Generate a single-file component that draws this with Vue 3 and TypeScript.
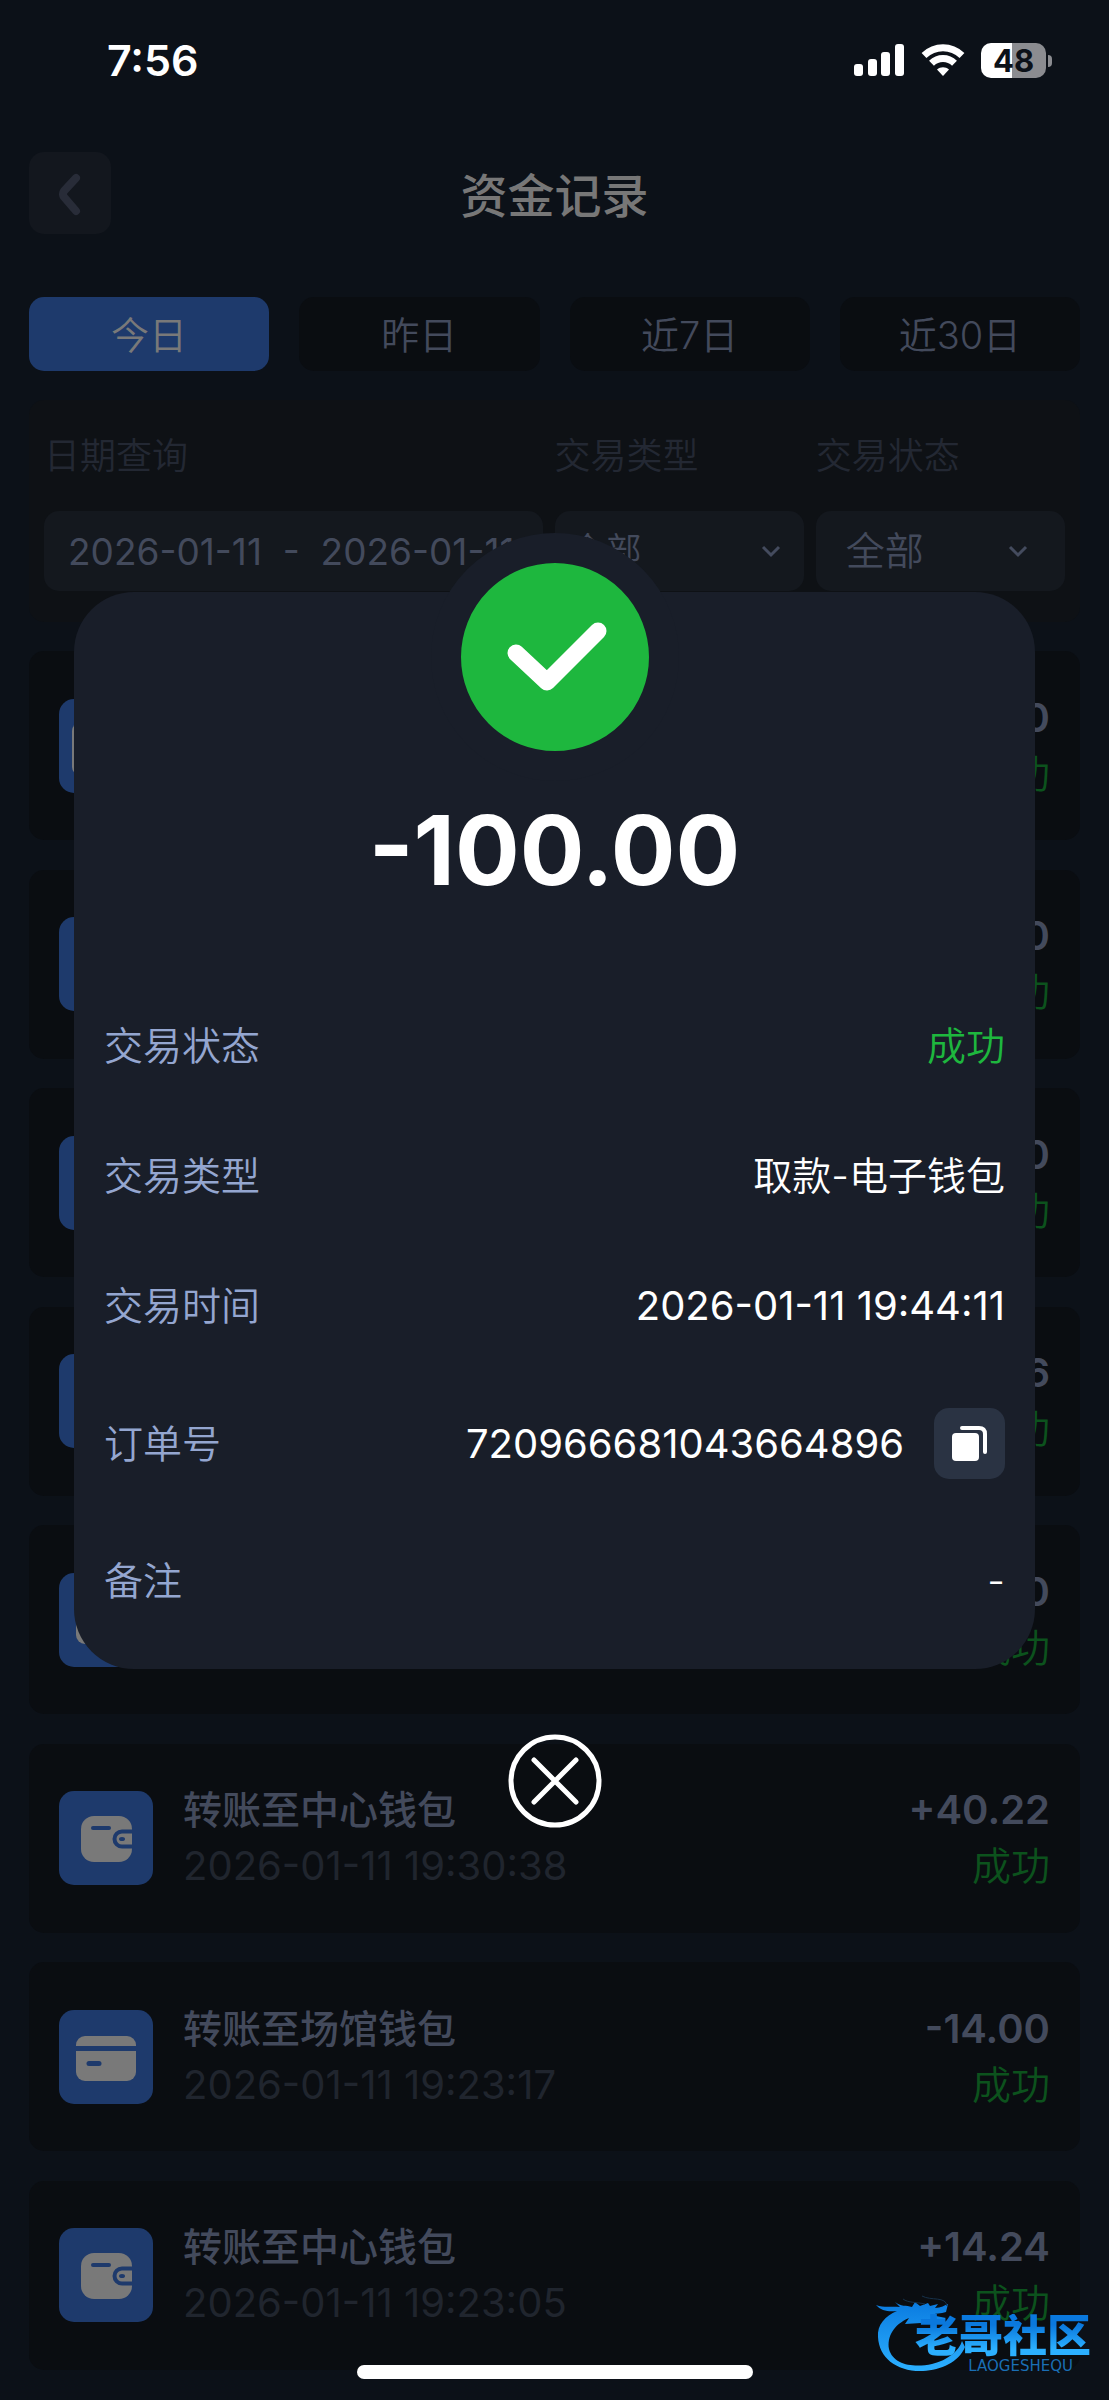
<script setup lang="ts">
import { ref } from 'vue'

type IconKind = 'withdraw' | 'wallet' | 'card'

interface FundRecord {
  id: number
  icon: IconKind
  title: string
  time: string
  amount: string
}

const ranges: string[] = ['今日', '昨日', '近7日', '近30日']
const activeRange = ref(0)
const dateRange = ref('2026-01-11  -  2026-01-11')
const tradeType = ref('全部')
const tradeStatus = ref('全部')

const records: FundRecord[] = [
  { id: 1, icon: 'withdraw', title: '取款-电子钱包', time: '2026-01-11 19:44:11', amount: '-100.00' },
  { id: 2, icon: 'wallet', title: '转账至中心钱包', time: '2026-01-11 19:43:52', amount: '+60.00' },
  { id: 3, icon: 'wallet', title: '转账至中心钱包', time: '2026-01-11 19:41:20', amount: '+20.00' },
  { id: 4, icon: 'wallet', title: '转账至中心钱包', time: '2026-01-11 19:36:47', amount: '+34.46' },
  { id: 5, icon: 'card', title: '转账至场馆钱包', time: '2026-01-11 19:31:02', amount: '-40.00' },
  { id: 6, icon: 'wallet', title: '转账至中心钱包', time: '2026-01-11 19:30:38', amount: '+40.22' },
  { id: 7, icon: 'card', title: '转账至场馆钱包', time: '2026-01-11 19:23:17', amount: '-14.00' },
  { id: 8, icon: 'wallet', title: '转账至中心钱包', time: '2026-01-11 19:23:05', amount: '+14.24' },
]
</script>

<template>
  <div class="page">
    <div class="status-bar">
      <span class="clock">7:56</span>
      <div class="indicators">
        <svg class="signal" width="50" height="32" viewBox="0 0 50 32" fill="#fff">
          <rect x="0" y="20" width="9" height="12" rx="3" />
          <rect x="14" y="15" width="9" height="17" rx="3" />
          <rect x="27" y="8" width="9" height="24" rx="3" />
          <rect x="41" y="0" width="9" height="32" rx="3" />
        </svg>
        <svg class="wifi" width="44" height="32" viewBox="0 0 44 32">
          <g fill="none" stroke="#fff" stroke-width="7">
            <path d="M3 11.5C14 1.2 30 1.2 41 11.5" />
            <path d="M10.5 19.3C17 13 27 13 33.5 19.3" />
          </g>
          <path d="M22 32L16 25.500C19.500 22.500 24.500 22.500 28 25.500Z" fill="#fff" />
        </svg>
        <div class="battery"><span>48</span></div>
      </div>
    </div>

    <header class="header">
      <button class="back" type="button" aria-label="返回">
        <svg width="82" height="82" viewBox="0 0 82 82" fill="none">
          <path d="M47 26L35 39Q33 42 35 45L47 59" stroke="#282c38" stroke-width="8" stroke-linecap="round" stroke-linejoin="round" />
        </svg>
      </button>
      <h1>资金记录</h1>
    </header>

    <nav class="ranges">
      <button
        v-for="(r, i) in ranges"
        :key="r"
        type="button"
        :class="{ active: i === activeRange }"
        @click="activeRange = i"
      >{{ r }}</button>
    </nav>

    <section class="filters">
      <div class="field">
        <label for="date-range">日期查询</label>
        <input id="date-range" v-model="dateRange" class="control date" type="text" readonly />
      </div>
      <div class="field">
        <label for="trade-type">交易类型</label>
        <div class="select-wrap compact">
          <select id="trade-type" v-model="tradeType" class="control"><option>全部</option></select>
          <svg width="20" height="14" viewBox="0 0 20 14" fill="none"><path d="M2 3L10 11L18 3" stroke="#444b5e" stroke-width="3" /></svg>
        </div>
      </div>
      <div class="field">
        <label for="trade-status">交易状态</label>
        <div class="select-wrap">
          <select id="trade-status" v-model="tradeStatus" class="control"><option>全部</option></select>
          <svg width="20" height="14" viewBox="0 0 20 14" fill="none"><path d="M2 3L10 11L18 3" stroke="#444b5e" stroke-width="3" /></svg>
        </div>
      </div>
    </section>

    <ul class="records">
      <li v-for="item in records" :key="item.id" class="record">
        <span class="tile">
          <svg v-if="item.icon === 'wallet'" width="94" height="94" viewBox="0 0 94 94">
            <rect x="22" y="25" width="51" height="46" rx="13" fill="#797979" />
            <path d="M34 37H50" stroke="#1e3a6c" stroke-width="4" stroke-linecap="round" />
            <path d="M75 40.500H63A7.500 7.500 0 0 0 63 55.500H75" fill="none" stroke="#1e3a6c" stroke-width="4" />
            <ellipse cx="63" cy="48" rx="3" ry="2" fill="#1e3a6c" />
          </svg>
          <svg v-else-if="item.icon === 'card'" width="94" height="94" viewBox="0 0 94 94">
            <rect x="17" y="26" width="60" height="45" rx="9" fill="#797979" />
            <path d="M17 38.500H77" stroke="#1e3a6c" stroke-width="5" />
            <path d="M30 53.500H40" stroke="#1e3a6c" stroke-width="5" stroke-linecap="round" />
          </svg>
          <svg v-else width="94" height="94" viewBox="0 0 94 94">
            <rect x="13" y="24" width="68" height="52" rx="8" fill="#797979" />
            <circle cx="47" cy="50" r="10" fill="#1e3a6c" />
          </svg>
        </span>
        <div class="info">
          <strong>{{ item.title }}</strong>
          <time>{{ item.time }}</time>
        </div>
        <div class="result">
          <strong>{{ item.amount }}</strong>
          <span>成功</span>
        </div>
      </li>
    </ul>

    <div class="overlay">
      <section class="dialog" role="dialog" aria-label="交易详情">
        <div class="badge">
          <svg width="188" height="188" viewBox="0 0 188 188" fill="none">
            <path d="M55 90L86 119L137 68" stroke="#fff" stroke-width="17" stroke-linecap="round" stroke-linejoin="round" />
          </svg>
        </div>
        <p class="amount">-100.00</p>
        <dl class="details">
          <div><dt>交易状态</dt><dd class="ok">成功</dd></div>
          <div><dt>交易类型</dt><dd>取款-电子钱包</dd></div>
          <div><dt>交易时间</dt><dd class="number">2026-01-11 19:44:11</dd></div>
          <div>
            <dt>订单号</dt>
            <dd class="number">
              720966681043664896
              <button class="copy" type="button" aria-label="复制订单号">
                <svg width="71" height="71" viewBox="0 0 71 71">
                  <rect x="18" y="25" width="27" height="28" rx="4" fill="#fff" />
                  <path d="M28 20H45Q51 20 51 26V44" fill="none" stroke="#fff" stroke-width="4" stroke-linecap="round" />
                </svg>
              </button>
            </dd>
          </div>
          <div><dt>备注</dt><dd>-</dd></div>
        </dl>
      </section>
      <button class="close" type="button" aria-label="关闭">
        <svg width="94" height="94" viewBox="0 0 94 94" fill="none" stroke="#fff" stroke-width="5" stroke-linecap="round">
          <circle cx="47" cy="47" r="44" />
          <path d="M26 26L68 68M68 26L26 68" />
        </svg>
      </button>
    </div>

    <div class="watermark">
      <svg width="100" height="80" viewBox="0 0 100 80">
        <defs>
          <linearGradient id="wm" x1="0" y1="0" x2="0" y2="1">
            <stop offset="0" stop-color="#0a7be0" />
            <stop offset="1" stop-color="#2cb0ff" />
          </linearGradient>
        </defs>
        <path
          fill="url(#wm)"
          d="M1 11C9 14 17 12 25 13L20 8C26 13 31 11 37 13L40 8L45 12L53 9L55 12L63 10L60 14C66 14 70 11 73 10L71 18C66 20 60 19 56 21L71 24L66 28C58 26 52 25 46 29L30 30L34 24C18 31 12 43 14 55C18 71 39 74 57 70C73 66 84 57 87 47L90 53C84 68 66 76 48 77C22 78 4 64 3 43C2 31 10 22 22 17C14 18 6 17 1 11Z"
        />
        <path d="M28 5C33 9 42 8 50 10M47 2C56 7 71 2 72 12" fill="none" stroke="#16314a" stroke-width="1" />
      </svg>
      <div class="wm-text">
        <b>老哥社区</b>
        <small>LAOGESHEQU</small>
      </div>
    </div>
    <div class="home-indicator"></div>
  </div>
</template>

<style>
body {
  margin: 0;
  background: #0c1118;
}
</style>

<style scoped>
* {
  box-sizing: border-box;
}

.page {
  position: relative;
  display: flex;
  flex-direction: column;
  min-height: 100vh;
  padding: 0 29px 30px;
  background: #0c1118;
  color: #434a5c;
  font-family: 'Inter', 'Noto Sans CJK SC', sans-serif;
  font-size: 39px;
  line-height: 56px;
}

button,
input,
select {
  margin: 0;
  padding: 0;
  border: 0;
  font: inherit;
  color: inherit;
}

svg {
  display: block;
}

.status-bar {
  display: flex;
  align-items: center;
  justify-content: space-between;
  height: 120px;
  padding: 0 34px 0 78px;
  color: #fff;
}

.clock {
  font-size: 43px;
  font-weight: 600;
}

.indicators {
  display: flex;
  align-items: center;
}

.wifi {
  margin: 0 16px 0 17px;
}

.battery {
  position: relative;
  width: 65px;
  height: 35px;
  border-radius: 10px;
  background: linear-gradient(90deg, #fff 48%, #8b8c90 48%);
  color: #0c1118;
  font-size: 31px;
  font-weight: 700;
  line-height: 35px;
  text-align: center;
}

.battery::after {
  content: '';
  position: absolute;
  top: 12px;
  right: -6px;
  width: 4px;
  height: 12px;
  border-radius: 0 4px 4px 0;
  background: #8b8c90;
}

.header {
  display: grid;
  grid-template-columns: 82px 1fr 82px;
  align-items: center;
  margin-top: 32px;
}

.back {
  border-radius: 15px;
  background: #13171e;
}

.header h1 {
  margin: 0;
  padding-top: 5px;
  color: #777;
  font-size: 47px;
  font-weight: 500;
  text-align: center;
}

.ranges {
  display: grid;
  grid-template-columns: repeat(4, 1fr);
  gap: 30px;
  margin-top: 63px;
}

.ranges button {
  height: 74px;
  padding-top: 2px;
  border-radius: 15px;
  background: #0a0d11;
  font-size: 38px;
  font-weight: 350;
}

.ranges .active {
  background: #1e3a6c;
  color: #797979;
}

.filters {
  display: grid;
  grid-template-columns: 2fr 1fr 1fr;
  gap: 12px;
  margin-top: 29px;
  padding: 28px 15px 31px;
  border-radius: 15px;
  background: #0e1115;
}

.field {
  display: flex;
  flex-direction: column;
  gap: 27px;
  min-width: 0;
}

.field label {
  color: #232833;
  font-size: 36px;
  font-weight: 350;
}

.control {
  width: 100%;
  height: 80px;
  padding: 0 30px;
  border-radius: 15px;
  background: #14181e;
  font-weight: 350;
  appearance: none;
}

.date {
  padding: 0 24px;
  font-size: 37px;
  font-weight: 400;
}

.select-wrap {
  position: relative;
}

.select-wrap svg {
  position: absolute;
  top: 33px;
  right: 37px;
}

.compact .control {
  padding: 0 15px;
  font-size: 36px;
}

.compact svg {
  right: 23px;
}

.records {
  display: flex;
  flex: 1;
  flex-direction: column;
  justify-content: space-between;
  margin: 29px 0 0;
  padding: 0;
  list-style: none;
}

.record {
  display: flex;
  align-items: center;
  gap: 30px;
  height: 189px;
  padding: 0 30px;
  border-radius: 15px;
  background: #0a0d11;
}

.tile {
  border-radius: 15px;
  background: #1e3a6c;
}

.info,
.result {
  display: flex;
  flex-direction: column;
}

.info {
  flex: 1;
}

.info strong {
  font-weight: 500;
}

.info time {
  color: #20252e;
  font-size: 40px;
}

.result {
  align-items: flex-end;
}

.result strong {
  font-size: 40px;
  font-weight: 600;
}

.result span {
  color: #0c521d;
  font-weight: 350;
}

.overlay {
  position: absolute;
  inset: 0;
  display: flex;
  flex-direction: column;
  align-items: center;
  padding: 592px 74px 0;
}

.dialog {
  display: flex;
  flex-direction: column;
  align-items: center;
  width: 100%;
  padding: 0 30px 60px;
  border-radius: 60px;
  background: #191e29;
}

.badge {
  margin-top: -59px;
  border: 30px solid #191e29;
  border-radius: 50%;
  background: #1eb73e;
}

.amount {
  margin: 13px 0 0;
  color: #fff;
  font-size: 96px;
  font-weight: 700;
  line-height: 112px;
}

.details {
  display: flex;
  flex-direction: column;
  gap: 74px;
  width: 100%;
  margin: 112px 0 0;
}

.details div {
  display: flex;
  align-items: center;
  justify-content: space-between;
}

.details dt {
  color: #94a6d0;
  font-weight: 350;
}

.details dd {
  display: flex;
  align-items: center;
  gap: 30px;
  margin: 0;
  color: #fff;
  font-weight: 350;
}

.details .ok {
  color: #1eb73e;
}

.details .number {
  font-size: 40px;
  font-weight: 400;
}

.copy {
  border-radius: 15px;
  background: #2a3343;
}

.close {
  margin-top: 65px;
  border-radius: 50%;
  background: none;
}

.watermark {
  position: absolute;
  right: 18px;
  bottom: 26px;
  display: flex;
  align-items: flex-end;
}

.wm-text {
  display: flex;
  flex-direction: column;
  align-items: flex-end;
  margin-left: -60px;
}

.wm-text b {
  background: linear-gradient(180deg, #0a78dd 25%, #2cb0ff 80%);
  background-clip: text;
  color: transparent;
  font-size: 44px;
  font-weight: 900;
  line-height: 44px;
}

.wm-text small {
  margin-right: 18px;
  color: #1a6fb5;
  font-family: 'DejaVu Sans', sans-serif;
  font-size: 15px;
  line-height: 16px;
}

.home-indicator {
  position: absolute;
  bottom: 21px;
  left: 50%;
  width: 396px;
  height: 14px;
  margin-left: -198px;
  border-radius: 7px;
  background: #fff;
}
</style>
